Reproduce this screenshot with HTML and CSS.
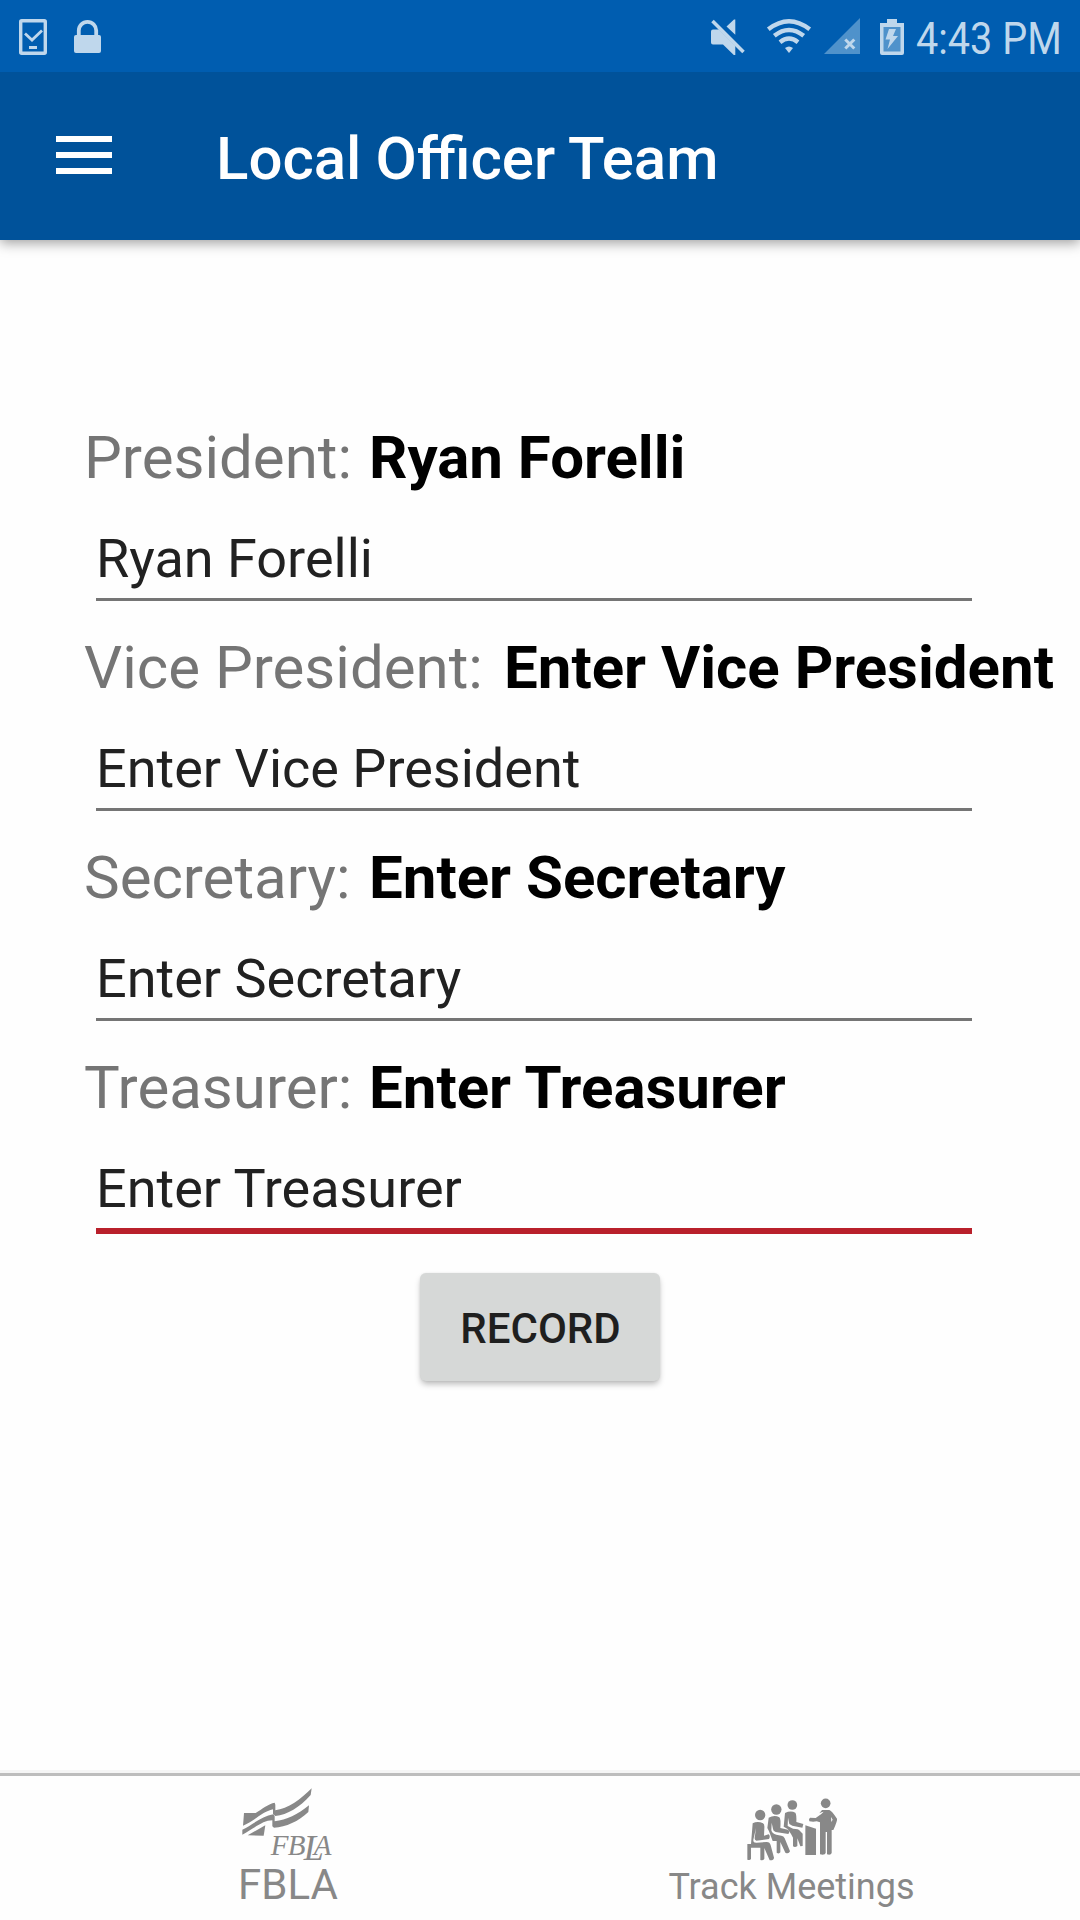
FILE: index.html
```html
<!DOCTYPE html>
<html lang="en">
<head>
<meta charset="utf-8">
<title>Local Officer Team</title>
<link rel="stylesheet" href="styles.css">
</head>
<body>
<div class="screen">
  <header class="status-bar">
    <div class="status-left">
      <svg class="icon-task" viewBox="0 0 28 36"><rect x="1.7" y="1.7" width="24.6" height="32.6" rx="1" fill="none" stroke="currentColor" stroke-width="3.4"/><path d="M6 14.5l7 6.5L23 11.5" fill="none" stroke="currentColor" stroke-width="2.8"/><path d="M10 27h8v3h-8z" fill="currentColor"/></svg>
      <svg class="icon-lock" viewBox="0 0 27 33"><path d="M4.8 16v-5.500a8.700 8.700 0 0 1 17.400 0V16" fill="none" stroke="currentColor" stroke-width="3.8"/><rect y="15" width="27" height="18" rx="2" fill="currentColor"/></svg>
    </div>
    <div class="status-right">
      <svg class="icon-mute" viewBox="0 0 34 36" fill="currentColor"><path d="M0 12.500q0-2 2-2h6L24.300 26.800V36h-1.500L12 25.500H2q-2 0-2-2zM15.500 7.500L23 .5h1.300V15.800z"/><path d="M1.500 2L32.500 33" stroke="currentColor" stroke-width="3.5"/></svg>
      <svg class="icon-wifi" viewBox="0 0 44 34" fill="none" stroke="currentColor" stroke-width="4.400"><path d="M1.300 10.300Q22-5.800 42.700 10.300M7.300 16.800Q22 5 36.700 16.800M13 23.200Q22 16 31 23.200"/><path d="M18 29q4-3 8 0l-4 5z" fill="currentColor" stroke="none"/></svg>
      <svg class="icon-signal" viewBox="0 0 36 36"><path d="M36 0v36H0z" fill="#4f92cb"/><path d="M21.300 21.500l9 9M30.300 21.500l-9 9" stroke="currentColor" stroke-width="3"/></svg>
      <svg class="icon-battery" viewBox="0 0 24 36"><path d="M7 0h10v4h7v30q0 2-2 2H2q-2 0-2-2V4h7z" fill="currentColor"/><path d="M3.500 8h17v24.500h-17z" fill="#4f92cb"/><path d="M9 10h7l-3 7h5L7.500 30l2.500-9.500H5.500z" fill="currentColor"/></svg>
      <span class="clock">4:43 PM</span>
    </div>
  </header>
  <div class="app-bar">
    <svg class="icon-menu" viewBox="0 0 56 38" fill="currentColor"><path d="M0 0h56v6H0zM0 16h56v6H0zM0 32h56v6H0z"/></svg>
    <h1 class="title">Local Officer Team</h1>
  </div>
  <main class="form">
    <div class="row"><div class="caption"><span class="role">President:</span><b class="name">Ryan Forelli</b></div><input class="field" value="Ryan Forelli"></div>
    <div class="row"><div class="caption"><span class="role role-wide">Vice President:</span><b class="name">Enter Vice President</b></div><input class="field" value="Enter Vice President"></div>
    <div class="row"><div class="caption"><span class="role">Secretary:</span><b class="name">Enter Secretary</b></div><input class="field" value="Enter Secretary"></div>
    <div class="row"><div class="caption"><span class="role">Treasurer:</span><b class="name">Enter Treasurer</b></div><input class="field field-active" value="Enter Treasurer"></div>
    <button class="record">RECORD</button>
  </main>
  <nav class="tabs">
    <div class="tab">
      <svg class="icon-fbla" viewBox="65 84 273 219" fill="currentColor">
        <path d="M71 159H106C125 147 145 131 163 128L165 134V151C202 147 244 116 274 85L271 105C237 143 202 164 165 168L158 162V148C126 155 103 183 68 197z"/>
        <path d="M266 136L264 156C235 184 197 201 161 203L156 199V181C128 181 108 201 66 224V209C98 193 126 168 159 163L163 169V184C199 180 232 164 266 136z"/>
        <path d="M82 226L135 196L130 227z"/>
        <g class="mark"><text x="151" y="285">F</text><text x="202" y="285">B</text><text class="mark-l" x="250" y="299">L</text><text x="280" y="285">A</text></g>
      </svg>
      <span class="tab-label tab-label-large">FBLA</span>
    </div>
    <div class="tab">
      <svg class="icon-meeting" viewBox="80 55 272 189" fill="currentColor">
        <circle cx="119.500" cy="106" r="15.500"/><circle cx="168" cy="89.500" r="15.500"/><circle cx="216" cy="76" r="14.500"/><circle cx="316" cy="71" r="14.500"/>
        <path d="M97 131Q112 123 128 131Q133 134 132 145L131 168L145 164Q151 169 146 178L108 183Q102 181 103 174L107 145L99 180Q98 190 109 189L139 187Q149 187 151 197L161 234Q160 243 148 242L132 205V237Q131 243 120 241V204H92V237Q90 243 81 240V193H92z"/>
        <path d="M145 114Q162 105 177 113Q182 117 180 145L203 150Q210 155 204 163L166 157Q158 154 158 148L154 129L153 152Q155 162 168 165L183 168Q190 169 193 176L209 215Q205 224 195 219L180 187V218Q176 224 169 219V184H157L146 155L141 145z"/>
        <path d="M194 100Q211 92 225 99Q229 105 228 127L249 133L246 144L216 138L207 133L203 114L202 139L218 147Q235 147 239 154L247 162V199L240 200L231 176V199Q224 205 218 200V174L212 163L202 148L190 141z"/>
        <path d="M255 137L287 147V226H255z"/>
        <path d="M305 91H327Q333 92 350 117Q352 122 339 151H334V220Q332 227 320 224V157H316V220Q314 227 299 224V128L289 125Q279 127 267 125Q264 118 269 114L286 115L303 103L310 96Q304 96 297 101z"/>
        <path d="M332 112L337 120L333 127z" fill="#fefefe"/>
      </svg>
      <span class="tab-label">Track Meetings</span>
    </div>
  </nav>
</div>
</body>
</html>
```
FILE: styles.css
```css
* { box-sizing: border-box; }
body { margin: 0; background: #fefefe; font-family: Roboto, "Liberation Sans", sans-serif; }
svg { display: block; flex: none; overflow: visible; }
.screen { width: 1080px; height: 1920px; display: flex; flex-direction: column; overflow: hidden; }
.status-bar { position: relative; z-index: 1; height: 72px; flex: none; display: flex; justify-content: space-between; background: #005db0; color: #bfd7ec; }
.status-left, .status-right { display: flex; align-items: flex-start; }
.status-left { padding: 19px 0 0 19px; gap: 26.500px; }
.icon-task { width: 28px; height: 36px; }
.icon-lock { width: 27px; height: 33px; margin-top: 1px; }
.status-right { padding: 19px 19px 0 0; }
.icon-mute { width: 34px; height: 36px; }
.icon-wifi { width: 44px; height: 34px; margin-left: 22px; }
.icon-signal { width: 36px; height: 36px; margin: -1px 0 0 13px; }
.icon-battery { width: 24px; height: 36px; margin-left: 20px; }
.clock { width: 145px; margin: -7px 0 0 12px; font-size: 45px; line-height: 54px; white-space: nowrap; transform: scaleX(.88); transform-origin: left; }
.app-bar { height: 168px; flex: none; display: flex; align-items: flex-start; padding: 64px 0 0 56px; background: #00529a; color: #fff; box-shadow: 0 3px 12px rgba(0, 0, 0, .38); }
.icon-menu { width: 56px; height: 38px; }
.title { margin: -12px 0 0 104px; font-size: 60px; line-height: 70px; font-weight: 500; word-spacing: -.8px; white-space: nowrap; }
.form { flex: 1; display: flex; flex-direction: column; padding: 183px 0 0 84px; }
.row { height: 210px; flex: none; display: flex; flex-direction: column; }
.caption { display: flex; font-size: 60px; line-height: 70px; white-space: nowrap; }
.role { width: 285px; flex: none; color: #757575; }
.role-wide { width: 420px; }
.name { color: #000; font-weight: 700; }
.field { width: 876px; height: 75px; margin: 33px 0 0 12px; padding: 0 0 8px; border: 0; border-bottom: 3px solid #757575; border-radius: 0; outline: 0; background: transparent; color: #212121; font: 54px/64px Roboto, "Liberation Sans", sans-serif; }
.field-active { height: 78px; border-bottom: 6px solid #b9202b; }
.record { width: 240px; height: 108px; margin: 10px 0 0 336px; padding: 3px 0 0 1px; border: 0; border-radius: 6px; background: #d6d8d7; color: #1f1f1f; font: 500 42px/49px Roboto, "Liberation Sans", sans-serif; box-shadow: 0 4px 6px -1px rgba(0, 0, 0, .28), 0 0 2px rgba(0, 0, 0, .08); }
.tabs { height: 147px; flex: none; display: flex; padding: 0 37px; border-top: 3px solid #bdbdbd; box-shadow: 0 -3px 0 #f5f5f5; color: #888; }
.tab { flex: 1; display: flex; flex-direction: column; align-items: center; }
.icon-fbla { width: 91px; height: 73px; margin: 12px 0 0 -3px; }
.mark { font-family: "Liberation Serif", serif; font-style: italic; font-size: 87px; }
.mark-l { font-size: 108px; }
.icon-meeting { width: 90.700px; height: 63px; margin: 22px 0 0 1px; }
.tab-label { margin-top: 5px; font-size: 36px; line-height: 42px; white-space: nowrap; }
.tab-label-large { margin: -1px 0 0 -1px; font-size: 42px; line-height: 49px; }
```
